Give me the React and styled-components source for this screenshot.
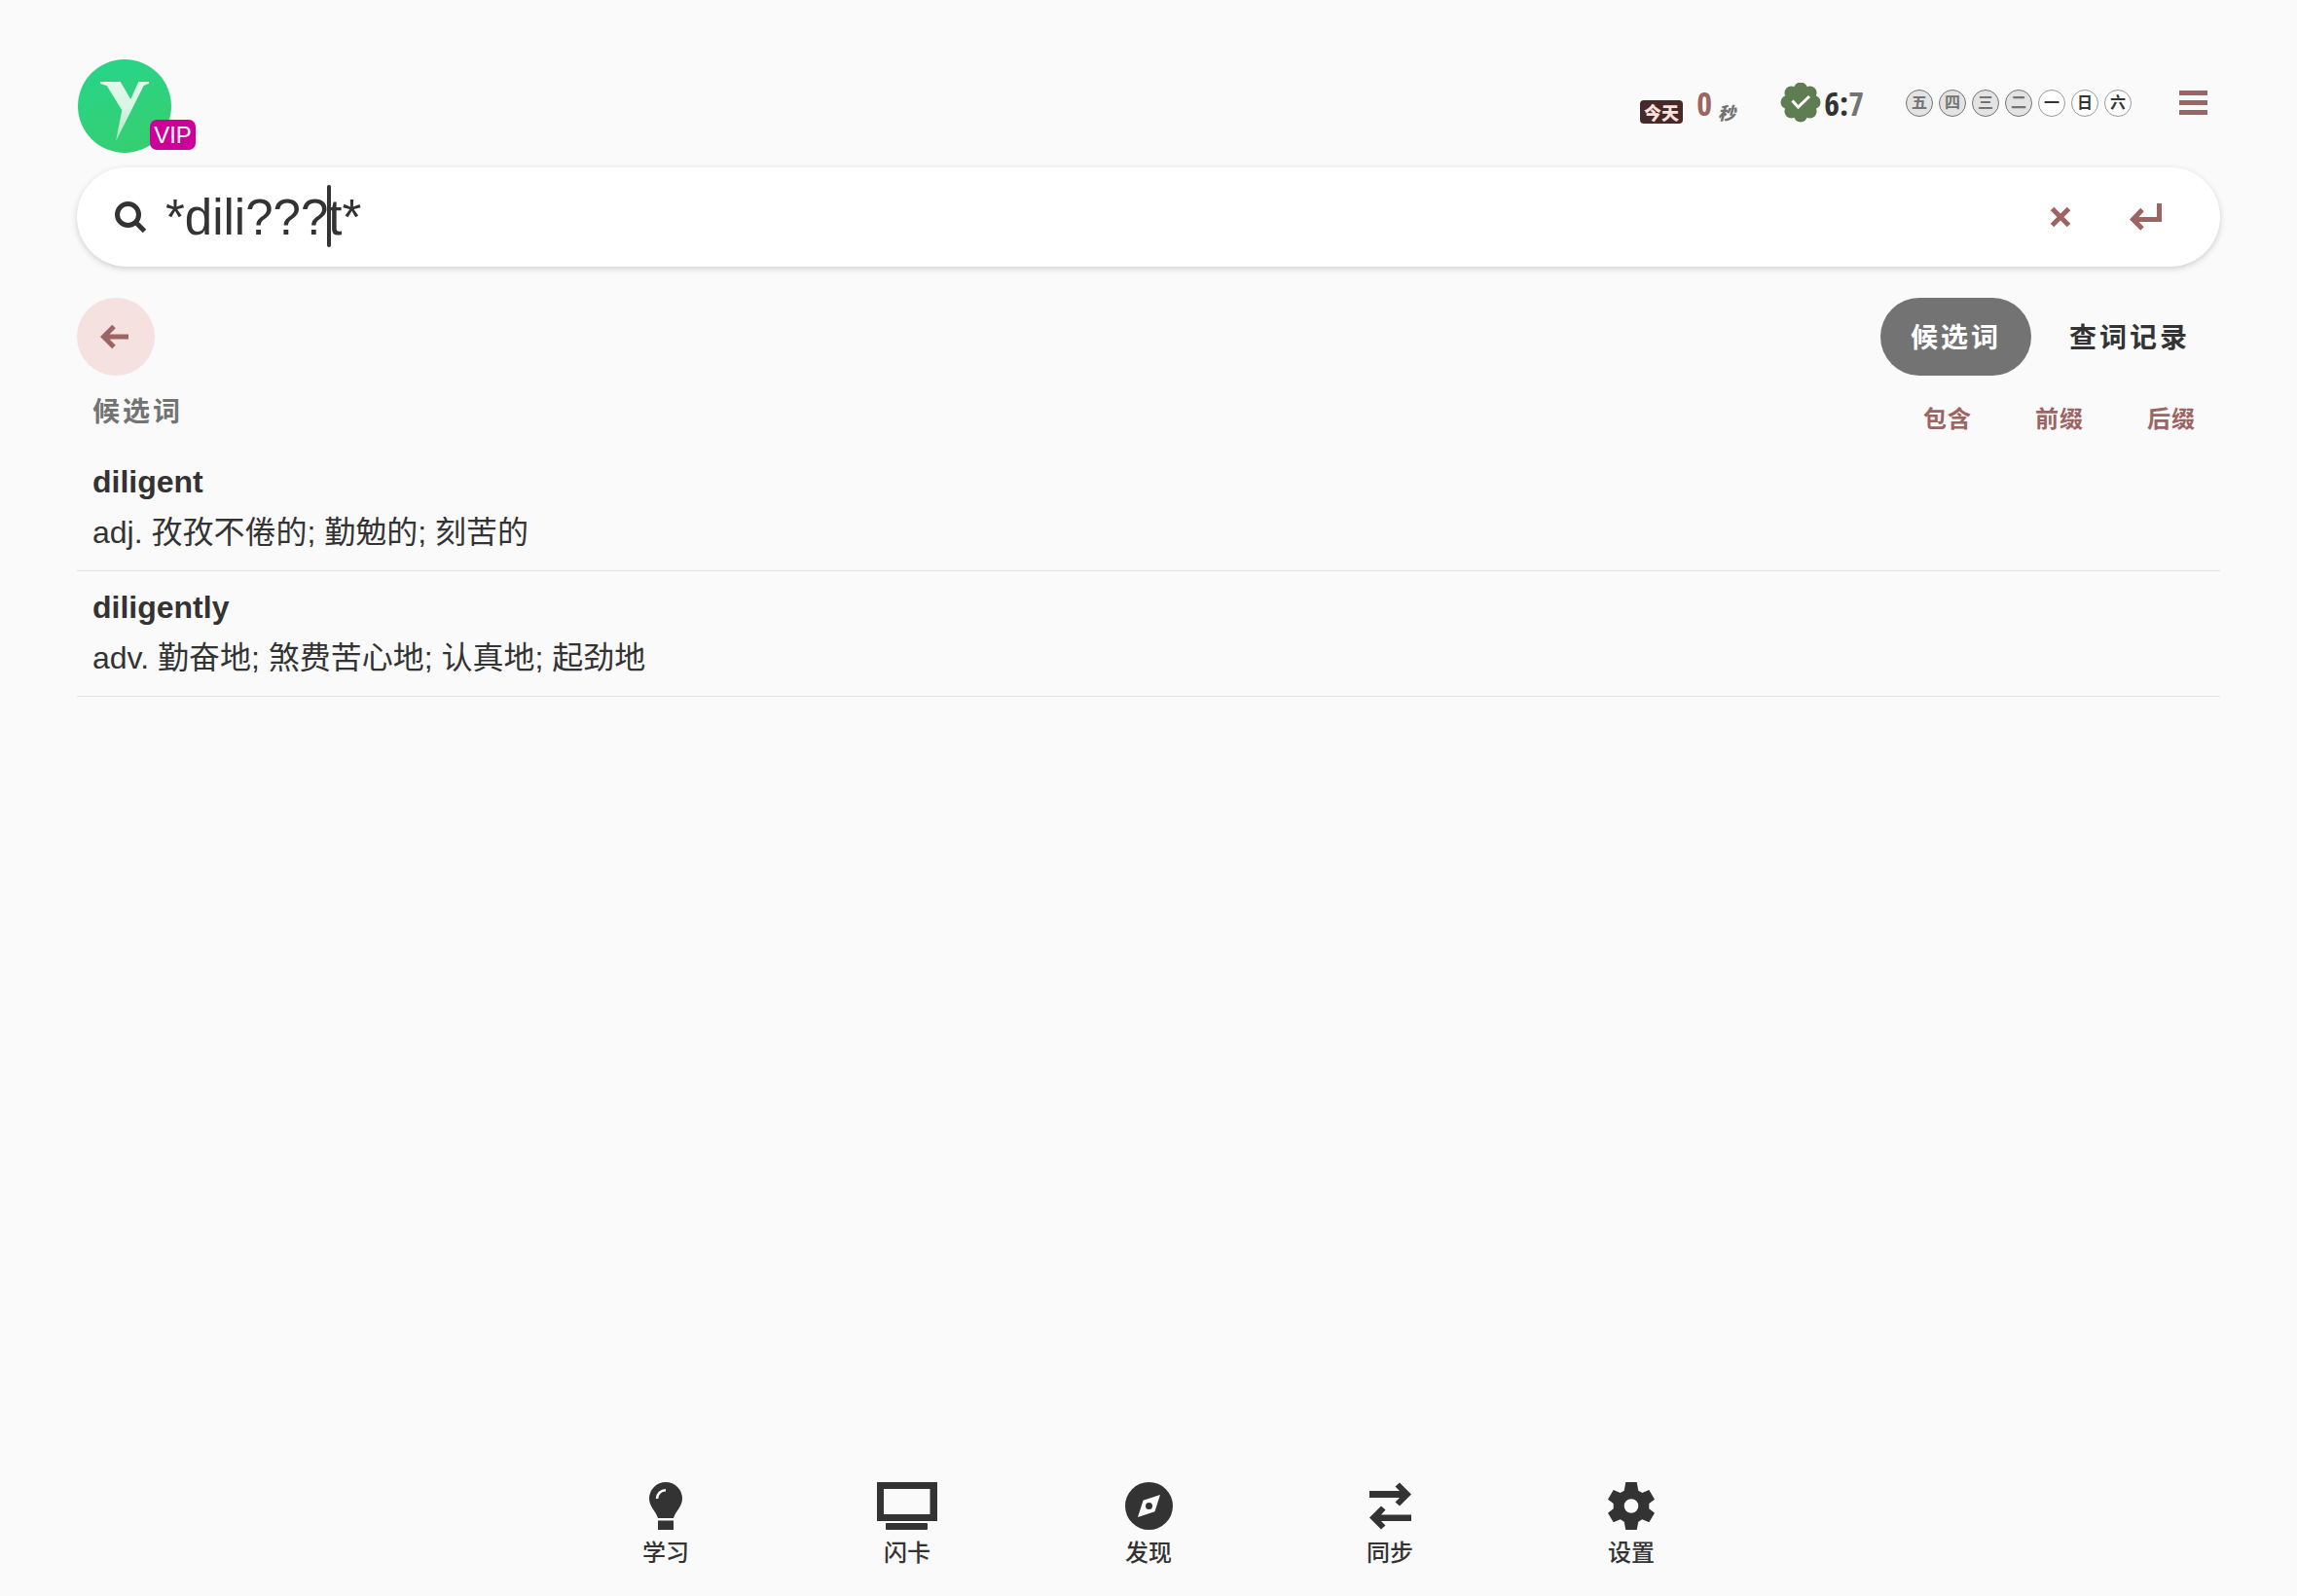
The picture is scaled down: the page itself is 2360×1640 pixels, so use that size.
import React, { useState } from "react";
import styled, { createGlobalStyle, css } from "styled-components";

const ink = "#333333";
const muted = "#737373";
const accent = "#9c6462";

const GlobalStyle = createGlobalStyle`
  *, *::before, *::after { box-sizing: border-box; }
  body {
    margin: 0;
    background: #fafafa;
    color: ${ink};
    font-family: "Liberation Sans", "Noto Sans CJK SC", sans-serif;
  }
  button, input { font: inherit; color: inherit; }
`;

const Page = styled.div`
  min-height: 100vh;
  display: flex;
  flex-direction: column;
  padding: 61px 79px 27px;
`;

const bareButton = css`
  display: flex;
  align-items: center;
  justify-content: center;
  margin: 0;
  padding: 0;
  border: 0;
  background: none;
  cursor: pointer;
`;

const Icon = styled.svg`
  display: block;
  flex: none;
  fill: ${(p) => (p.$line ? "none" : "currentColor")};
  stroke: ${(p) => (p.$line ? "currentColor" : "none")};
`;

/* Header */

const Header = styled.header`
  display: flex;
  justify-content: space-between;
  align-items: flex-start;
`;

const Account = styled.a`
  position: relative;
  display: block;
  margin-left: 1px;
  text-decoration: none;
`;

const VipBadge = styled.span`
  position: absolute;
  left: 74px;
  top: 62px;
  width: 47px;
  border-radius: 7px;
  background: #cc0099;
  color: #ffffff;
  font-size: 24px;
  line-height: 31px;
  text-align: center;
`;

const Status = styled.div`
  display: flex;
  align-items: center;
  height: 90px;
`;

const Today = styled.div`
  display: flex;
  align-items: flex-end;
  height: 42px;
  margin-right: 46px;
`;

const TodayTag = styled.span`
  width: 44px;
  border-radius: 4px;
  background: #482929;
  color: #ffe1de;
  font-family: "Noto Sans CJK SC", sans-serif;
  font-size: 18px;
  font-weight: 900;
  line-height: 24px;
  text-align: center;
`;

const Digits = styled.span`
  font-family: "Noto Sans ExtraCondensed", "Open Sans Condensed", "Roboto Condensed",
    "Liberation Sans Narrow", sans-serif;
  font-size: 34px;
  font-weight: 900;
  line-height: 42px;
  color: ${(p) => p.$color};
`;

const Seconds = styled(Digits)`
  width: 22px;
  margin: 0 3px 0 11px;
  text-align: center;
`;

const Unit = styled.span`
  color: ${muted};
  font-family: "Noto Sans CJK SC", sans-serif;
  font-size: 18px;
  font-style: italic;
  font-weight: 900;
  line-height: 24px;
`;

const Score = styled.div`
  display: flex;
  align-items: center;
  justify-content: space-between;
  width: 86px;
  margin-right: 43px;
`;

const Days = styled.ul`
  display: flex;
  gap: 6px;
  margin: 0 35px 0 0;
  padding: 0;
  list-style: none;
`;

const Day = styled.li`
  width: 28px;
  height: 28px;
  border: 1px solid ${(p) => (p.$past ? "#737373" : "#999999")};
  border-radius: 50%;
  background: ${(p) => (p.$past ? "#e3e3e3" : "#ffffff")};
  color: ${(p) => (p.$past ? muted : ink)};
  font-size: 16px;
  font-weight: 700;
  line-height: 26px;
  text-align: center;
`;

const MenuButton = styled.button`
  ${bareButton}
  width: 56px;
  height: 56px;
  color: ${accent};
`;

/* Search */

const SearchBar = styled.form`
  display: flex;
  align-items: center;
  height: 102px;
  margin: 15px 0 32px;
  padding: 0 44px 0 39px;
  border-radius: 51px;
  background: #ffffff;
  box-shadow: 0 2px 6px rgba(0, 0, 0, 0.18);
`;

const Field = styled.div`
  position: relative;
  flex: 1;
  margin-left: 18px;
`;

const SearchInput = styled.input`
  display: block;
  width: 100%;
  height: 80px;
  padding: 0 0 0 1px;
  border: 0;
  outline: 0;
  background: transparent;
  font-size: 51px;
`;

const Caret = styled.span`
  position: absolute;
  left: 167px;
  top: 7px;
  width: 4px;
  height: 64px;
  border-radius: 2px;
  background: ${ink};
`;

const SearchAction = styled.button`
  ${bareButton}
  width: 64px;
  height: 64px;
  margin-left: 24px;
  color: ${accent};
`;

/* Toolbar */

const Toolbar = styled.div`
  display: flex;
  justify-content: space-between;
`;

const BackButton = styled.button`
  ${bareButton}
  width: 80px;
  height: 80px;
  padding-right: 3px;
  border-radius: 50%;
  background: #f5e1df;
  color: ${accent};
`;

const Tabs = styled.div`
  display: flex;
  gap: 8px;
`;

const Tab = styled.button`
  ${bareButton}
  height: 80px;
  padding: 0 31px 2px;
  border-radius: 40px;
  background: ${(p) => (p.$active ? muted : "transparent")};
  color: ${(p) => (p.$active ? "#ffffff" : ink)};
  font-size: 28px;
  font-weight: 700;
  letter-spacing: 3px;
`;

const SectionHead = styled.div`
  display: flex;
  justify-content: space-between;
  height: 72px;
  padding: 0 25px 0 16px;
`;

const SectionTitle = styled.h2`
  margin: 0;
  color: ${muted};
  font-size: 28px;
  font-weight: 700;
  letter-spacing: 3px;
  line-height: 75px;
`;

const Filters = styled.div`
  display: flex;
  gap: 65px;
  padding: 14px 0 2px;
`;

const Filter = styled.button`
  ${bareButton}
  color: ${accent};
  font-size: 24px;
  font-weight: 700;
  letter-spacing: 1px;
`;

/* Results */

const Results = styled.ul`
  flex: 1;
  margin: 0;
  padding: 0;
  list-style: none;
`;

const Result = styled.li`
  padding: 11px 16px 13px;
  border-bottom: 1px solid #e2e2e2;
  font-size: 32px;
  line-height: 52px;
`;

const Word = styled.div`
  font-weight: 700;
`;

/* Bottom navigation */

const BottomNav = styled.nav`
  display: grid;
  grid-template-columns: repeat(5, 248px);
  justify-content: center;
`;

const NavItem = styled.a`
  display: flex;
  flex-direction: column;
  align-items: center;
  gap: 7px;
  color: ${ink};
  font-size: 24px;
  font-weight: 500;
  line-height: 34px;
  text-decoration: none;
`;

const Logo = () => (
  <Icon width="96" height="96" viewBox="0 0 96 96">
    <defs>
      <linearGradient id="disc" x1="0" y1="0" x2="0.4" y2="1">
        <stop offset="0" stopColor="#25d58b" />
        <stop offset="1" stopColor="#35cf72" />
      </linearGradient>
      <linearGradient id="mark" x1="0" y1="0" x2="0" y2="1">
        <stop offset="0" stopColor="#e2f8ea" />
        <stop offset="0.45" stopColor="#d9f5e4" />
        <stop offset="1" stopColor="#a9e6c0" />
      </linearGradient>
    </defs>
    <circle cx="48" cy="48" r="48" fill="url(#disc)" />
    <path
      d="M23 23H43.7L54.3 41L62.3 23H73V24.8L67.7 27L39 84L45.3 52.3L29.7 27L23 25Z"
      fill="url(#mark)"
    />
  </Icon>
);

const LOBES = [0, 45, 90, 135, 180, 225, 270, 315];

const CheckSeal = () => (
  <Icon width="42" height="42" viewBox="-21 -20 42 42" color="#5f7d53">
    <circle r="16" />
    {LOBES.map((a) => (
      <circle key={a} cy="-13.5" r="7" transform={`rotate(${a})`} />
    ))}
    <path d="M-8.5-1.5L-2.5 5L9-6" fill="none" stroke="#ffffff" strokeWidth="3" />
  </Icon>
);

const MenuIcon = () => (
  <Icon width="29" height="26" viewBox="0 0 29 26">
    <path d="M0 0H29V5H0ZM0 10H29V15H0ZM0 20H29V25H0Z" />
  </Icon>
);

const SearchIcon = () => (
  <Icon $line width="33" height="33" viewBox="0 0 33 33" strokeWidth="5">
    <circle cx="13.5" cy="13.5" r="11" />
    <path d="M20.5 20.5L30.5 30.5" />
  </Icon>
);

const CloseIcon = () => (
  <Icon $line width="22" height="22" viewBox="0 0 22 22" strokeWidth="5">
    <path d="M2.5 2.5L19.5 19.5M19.5 2.5L2.5 19.5" />
  </Icon>
);

const EnterIcon = () => (
  <Icon $line width="34" height="28" viewBox="0 0 34 28" strokeWidth="5">
    <path d="M30.5 0V16.5H5" />
    <path d="M13 6.5L3.5 16.5L13 26" />
  </Icon>
);

const BackIcon = () => (
  <Icon $line width="30" height="26" viewBox="0 0 30 26" strokeWidth="5">
    <path d="M5 13H29M14 2.5L3.5 13L14 23.5" />
  </Icon>
);

const BulbIcon = () => (
  <Icon width="34" height="49" viewBox="0 0 34 49">
    <path d="M17 0A17 17 0 0 1 34 17C34 25 27 30 25 37H9C7 30 0 25 0 17A17 17 0 0 1 17 0ZM9 39.5H25V49H9Z" />
    <path d="M8 17A9 9 0 0 1 17 8.2" fill="none" stroke="#fafafa" strokeWidth="2.5" />
  </Icon>
);

const ScreenIcon = () => (
  <Icon width="62" height="49" viewBox="0 0 62 49">
    <path fillRule="evenodd" d="M0 0H62V40H0ZM7 7V33H54.5V7Z" />
    <rect x="9" y="42" width="43" height="7" rx="1" />
  </Icon>
);

const CompassIcon = () => (
  <Icon width="49" height="49" viewBox="0 0 49 49">
    <circle cx="24.5" cy="24.5" r="24.5" />
    <path d="M36 13L18.5 18.8L13 36L30.5 30.2Z" fill="#fafafa" />
    <circle cx="24.5" cy="24.5" r="3.5" />
  </Icon>
);

const SwapIcon = () => (
  <Icon width="43" height="49" viewBox="0 0 43 49">
    <path d="M0 9H31L26.5 4.5L31 0.5L43 12.5L31 24.5L26.5 20.5L31 16H0Z" />
    <path d="M43 33.5H12L16.5 28.5L12 24.5L0 36.5L12 48.5L16.5 44.5L12 40H43Z" />
  </Icon>
);

const GearIcon = () => (
  <Icon width="48" height="49" viewBox="0 0 48 49">
    <path
      fillRule="evenodd"
      d="M18.3 0H29.7L31.3 8.7L35.3 11L42.3 8L48 17.7L42.3 22V27.3L48 31.7L42.3 41.3L35.3 38.3L31.3 40.7L29.7 49H18.3L16.7 40.7L12.7 38.3L5.7 41.3L0 31.7L5.7 27.3V22L0 17.7L5.7 8L12.7 11L16.7 8.7ZM24 17.2A7.3 7.3 0 1 0 24 31.8A7.3 7.3 0 1 0 24 17.2Z"
    />
  </Icon>
);

const DAYS = [
  ["五", true],
  ["四", true],
  ["三", true],
  ["二", true],
  ["一", false],
  ["日", false],
  ["六", false],
];

const RESULTS = [
  ["diligent", "adj. 孜孜不倦的; 勤勉的; 刻苦的"],
  ["diligently", "adv. 勤奋地; 煞费苦心地; 认真地; 起劲地"],
];

const NAV = [
  ["学习", BulbIcon],
  ["闪卡", ScreenIcon],
  ["发现", CompassIcon],
  ["同步", SwapIcon],
  ["设置", GearIcon],
];

export default function App() {
  const [query, setQuery] = useState("*dili???t*");
  const [tab, setTab] = useState("候选词");

  return (
    <>
      <GlobalStyle />
      <Page>
        <Header>
          <Account href="#account">
            <Logo />
            <VipBadge>VIP</VipBadge>
          </Account>
          <Status>
            <Today>
              <TodayTag>今天</TodayTag>
              <Seconds $color={accent}>0</Seconds>
              <Unit>秒</Unit>
            </Today>
            <Score>
              <CheckSeal />
              <Digits $color={ink}>
                6:<Digits $color={muted}>7</Digits>
              </Digits>
            </Score>
            <Days>
              {DAYS.map(([name, past]) => (
                <Day key={name} $past={past}>
                  {name}
                </Day>
              ))}
            </Days>
            <MenuButton type="button" aria-label="菜单">
              <MenuIcon />
            </MenuButton>
          </Status>
        </Header>

        <SearchBar role="search" onSubmit={(e) => e.preventDefault()}>
          <label htmlFor="query" aria-label="查词">
            <SearchIcon />
          </label>
          <Field>
            <SearchInput
              id="query"
              type="text"
              spellCheck={false}
              autoComplete="off"
              value={query}
              onChange={(e) => setQuery(e.target.value)}
            />
            <Caret aria-hidden="true" />
          </Field>
          <SearchAction type="button" aria-label="清除" onClick={() => setQuery("")}>
            <CloseIcon />
          </SearchAction>
          <SearchAction type="submit" aria-label="查询">
            <EnterIcon />
          </SearchAction>
        </SearchBar>

        <Toolbar>
          <BackButton type="button" aria-label="返回">
            <BackIcon />
          </BackButton>
          <Tabs>
            {["候选词", "查词记录"].map((name) => (
              <Tab key={name} type="button" $active={tab === name} onClick={() => setTab(name)}>
                {name}
              </Tab>
            ))}
          </Tabs>
        </Toolbar>

        <SectionHead>
          <SectionTitle>候选词</SectionTitle>
          <Filters>
            {["包含", "前缀", "后缀"].map((name) => (
              <Filter key={name} type="button">
                {name}
              </Filter>
            ))}
          </Filters>
        </SectionHead>

        <Results>
          {RESULTS.map(([word, meaning]) => (
            <Result key={word}>
              <Word>{word}</Word>
              <div>{meaning}</div>
            </Result>
          ))}
        </Results>

        <BottomNav>
          {NAV.map(([name, Glyph]) => (
            <NavItem key={name} href="#nav">
              <Glyph />
              {name}
            </NavItem>
          ))}
        </BottomNav>
      </Page>
    </>
  );
}
